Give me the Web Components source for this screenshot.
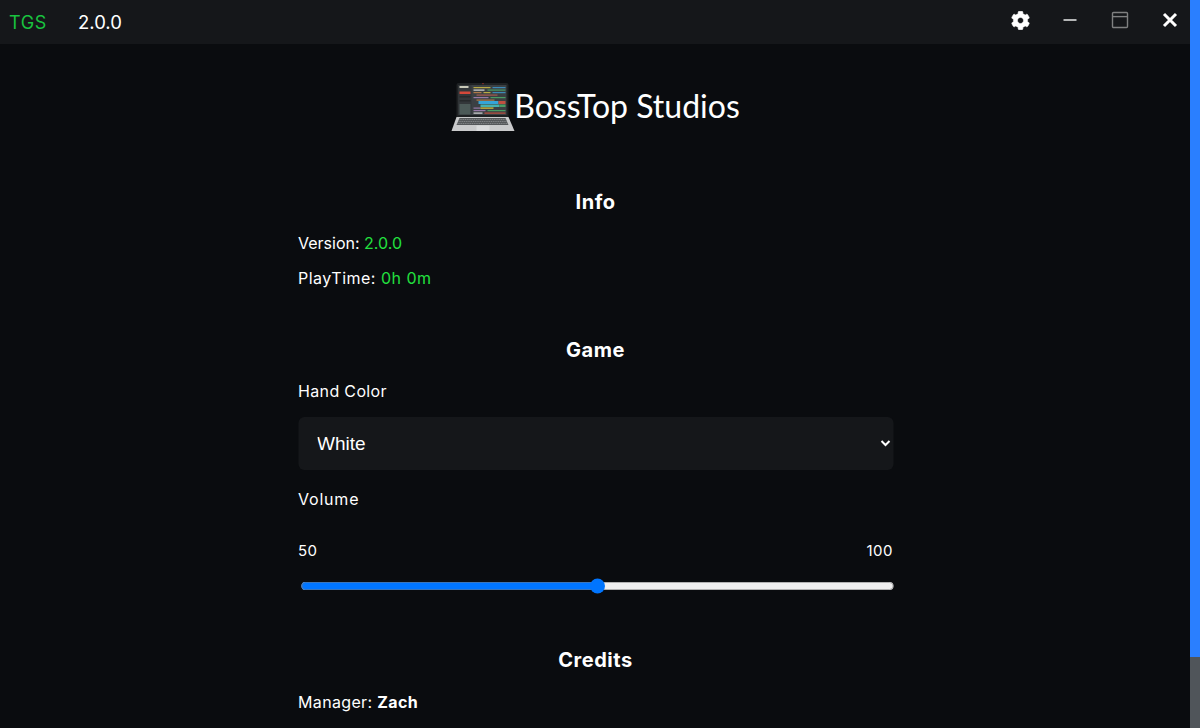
<!DOCTYPE html>
<html>
<head>
<meta charset="utf-8">
<title>TGS</title>
<style>
  html, body { margin: 0; height: 100%; overflow: hidden; background: #0a0c0f; }
  body { display: flex; font-family: Inter, "Liberation Sans", sans-serif; color: #fff; }
</style>
</head>
<body>
<app-window>
  <title-bar name="TGS" version="2.0.0"></title-bar>
  <studio-logo>BossTop Studios</studio-logo>
  <settings-section heading="Info">
    <info-row label="Version:" value="2.0.0" tone="green" style="letter-spacing:0"></info-row>
    <info-row label="PlayTime:" value="0h 0m" tone="green" style="letter-spacing:.5px"></info-row>
  </settings-section>
  <settings-section heading="Game">
    <color-select label="Hand Color" style="letter-spacing:.35px"></color-select>
    <volume-slider label="Volume" value="50" max="100" style="letter-spacing:.8px"></volume-slider>
  </settings-section>
  <settings-section heading="Credits">
    <info-row label="Manager:" value="Zach" tone="bold" style="letter-spacing:.35px;margin-top:18px"></info-row>
  </settings-section>
</app-window>
<fake-scrollbar></fake-scrollbar>

<script>
class AppWindow extends HTMLElement {
    constructor() {
        super();
        this.attachShadow({ mode: 'open' });
        this.shadowRoot.innerHTML = `
            <style>
                :host { display: block; flex: 1; min-width: 0; height: 728px; overflow: hidden; background: #0a0c0f; }
                .page { width: 595px; margin: 0 auto; transform: translateX(0.5px); }
            </style>
            <slot name="bar"></slot>
            <div class="page"><slot></slot></div>
        `;
    }
    connectedCallback() {
        const bar = this.querySelector('title-bar');
        if (bar) bar.slot = 'bar';
    }
}

class TitleBar extends HTMLElement {
    constructor() {
        super();
        this.attachShadow({ mode: 'open' });
        this.shadowRoot.innerHTML = `
            <style>
                :host { display: flex; align-items: center; height: 44px; background: #15171a; box-sizing: border-box; padding-left: 10px; gap: 10px; }
                .name { color: #19c23f; font-size: 18px; letter-spacing: .6px; width: 59px; margin-left: -1px; }
                .version { color: #fff; font-size: 18.5px; flex: 1; }
                .btn { display: flex; width: 40px; height: 40px; margin-bottom: 4px; align-items: center; justify-content: center; }
            </style>
            <span class="name"></span>
            <span class="version"></span>
            <div class="btn"><svg width="19" height="19" viewBox="0 0 512 512"><path fill="#fff" stroke="#fff" stroke-width="14" d="M487.4 315.7l-42.6-24.6c4.3-23.2 4.3-47 0-70.2l42.6-24.6c4.9-2.8 7.1-8.6 5.5-14-11.1-35.6-30-67.8-54.7-94.6-3.8-4.1-10-5.1-14.8-2.3L380.8 110c-17.9-15.4-38.5-27.3-60.8-35.1V25.8c0-5.6-3.9-10.5-9.4-11.7-36.7-8.2-74.3-7.8-109.2 0-5.5 1.2-9.4 6.1-9.4 11.7V75c-22.2 7.9-42.8 19.8-60.8 35.1L88.7 85.5c-4.9-2.8-11-1.9-14.8 2.3-24.7 26.7-43.6 58.9-54.7 94.6-1.7 5.4.6 11.2 5.5 14L67.3 221c-4.3 23.2-4.3 47 0 70.2l-42.6 24.6c-4.9 2.8-7.1 8.6-5.5 14 11.1 35.6 30 67.8 54.7 94.6 3.8 4.1 10 5.1 14.8 2.3l42.6-24.6c17.9 15.4 38.5 27.3 60.8 35.1v49.2c0 5.6 3.9 10.5 9.4 11.7 36.7 8.2 74.3 7.8 109.2 0 5.5-1.2 9.4-6.1 9.4-11.7v-49.2c22.2-7.9 42.8-19.8 60.8-35.1l42.6 24.6c4.9 2.8 11 1.9 14.8-2.3 24.7-26.7 43.6-58.9 54.7-94.6 1.5-5.5-.7-11.3-5.6-14.1zM256 336c-44.1 0-80-35.9-80-80s35.9-80 80-80 80 35.9 80 80-35.9 80-80 80z"/></svg></div>
            <div class="btn"><svg width="16" height="16" viewBox="0 0 16 16"><rect x="1.5" y="7" width="13" height="2" fill="#b4b5b6"/></svg></div>
            <div class="btn"><svg width="18" height="18" viewBox="0 0 18 18"><rect x="1.5" y="1.5" width="15" height="15" rx="1" fill="none" stroke="#7f8081" stroke-width="1.4"/><line x1="1.5" y1="5.6" x2="16.5" y2="5.6" stroke="#7f8081" stroke-width="1.4"/></svg></div>
            <div class="btn"><svg width="18" height="18" viewBox="0 0 18 18"><path d="M3 3 L15 15 M15 3 L3 15" stroke="#fff" stroke-width="3" fill="none"/></svg></div>
        `;
        this.shadowRoot.querySelector('.name').textContent = this.getAttribute('name');
        this.shadowRoot.querySelector('.version').textContent = this.getAttribute('version');
    }
}

class StudioLogo extends HTMLElement {
    constructor() {
        super();
        this.attachShadow({ mode: 'open' });
        this.shadowRoot.innerHTML = `
            <style>
                :host { display: flex; align-items: center; justify-content: center; height: 50px; margin-top: 38px; }
                .text { font-family: Lato, sans-serif; font-size: 32px; line-height: 40px; color: #fff; font-weight: 400; margin: -2px 0 0 -1px; }
                svg { display: block; margin-left: -2px; }
            </style>
            <svg width="66" height="50" viewBox="0 0 66 50">
                <path d="M7 3 Q7 1 9 1 L57 1 Q59 1 59 3 L59 35 L7 35 Z" fill="#1e2123"/>
                <rect x="33" y="1" width="1" height="1.2" fill="#c0392b"/>
                <rect x="9" y="3" width="48" height="30" fill="#3b4043"/>
                <rect x="9" y="3" width="13" height="30" fill="#33373a"/>
                <rect x="10" y="4" width="9" height="2" fill="#c8c8b8"/>
                <rect x="10" y="9.5" width="11" height="2.5" fill="#d4483a"/>
                <rect x="10" y="14" width="11" height="1.5" fill="#26292b"/>
                <rect x="10" y="18" width="11" height="1.5" fill="#26292b"/>
                <rect x="10" y="22" width="11" height="10.5" fill="#4c5a58"/>
                <rect x="24" y="5" width="17" height="1.2" fill="#b8a944"/><rect x="43" y="5" width="13" height="1.2" fill="#3c8ab8"/>
                <rect x="24" y="7.5" width="11" height="1.2" fill="#d8d8d8"/><rect x="38" y="7.5" width="18" height="1.2" fill="#4a9c64"/>
                <rect x="24" y="10" width="8" height="1.2" fill="#b07a48"/><rect x="34" y="10" width="7" height="1.2" fill="#b8a944"/><rect x="43" y="10" width="13" height="1.2" fill="#3c8ab8"/>
                <rect x="27" y="12.5" width="21" height="1.2" fill="#a85a50"/>
                <rect x="24" y="15" width="15" height="1.2" fill="#987aa8"/><rect x="41" y="15" width="15" height="1.2" fill="#4a9c64"/>
                <rect x="27" y="17.5" width="18" height="1.2" fill="#b07a48"/>
                <rect x="29" y="19" width="20" height="3" fill="#35a4d8"/><rect x="49" y="19" width="7" height="3" fill="#c05040"/>
                <rect x="31" y="22.5" width="19" height="2.5" fill="#45b0b0"/><rect x="50" y="22.5" width="6" height="2.5" fill="#4a9c64"/>
                <rect x="24" y="25.5" width="7" height="1.2" fill="#987aa8"/><rect x="31" y="25.5" width="13" height="1.2" fill="#e0c83c"/>
                <rect x="24" y="28" width="12" height="1.2" fill="#987aa8"/><rect x="38" y="28" width="18" height="1.2" fill="#4a9c64"/>
                <rect x="24" y="30.5" width="9" height="1.2" fill="#d8d8d8"/><rect x="35" y="30.5" width="21" height="1.2" fill="#c05040"/>
                <path d="M7 35 L59 35 L65 49 L2 49 Z" fill="#c9cacb"/>
                <path d="M10 36 L56 36 L59 43 L7 43 Z" fill="#55585a"/>
                <path d="M10 37.5 H56 M9 39.5 H57 M8 41.5 H58" stroke="#8b8e90" stroke-width="0.8" stroke-dasharray="1.2 .6"/>
                <rect x="27" y="43.5" width="13" height="5.5" fill="#dadbdc"/>
            </svg>
            <span class="text"><slot></slot></span>
        `;
    }
}

class SettingsSection extends HTMLElement {
    constructor() {
        super();
        this.attachShadow({ mode: 'open' });
        this.shadowRoot.innerHTML = `
            <style>
                :host { display: block; margin-top: 35px; }
                :host(:first-of-type) { margin-top: 57px; }
                h2 { margin: 0 0 17px; font-size: 20px; line-height: 26px; font-weight: 700; letter-spacing: .55px; text-align: center; color: #fff; }
            </style>
            <h2></h2>
            <div class="body"><slot></slot></div>
        `;
        this.shadowRoot.querySelector('h2').textContent = this.getAttribute('heading');
    }
}

class InfoRow extends HTMLElement {
    constructor() {
        super();
        this.attachShadow({ mode: 'open' });
        this.shadowRoot.innerHTML = `
            <style>
                :host { display: block; height: 35px; font-size: 16px; line-height: 22px; letter-spacing: .3px; color: #fff; }
                .green { color: #22e03f; }
                .bold { font-weight: 700; }
            </style>
            <span class="label"></span> <span class="val"></span>
        `;
        this.shadowRoot.querySelector('.label').textContent = this.getAttribute('label');
        const val = this.shadowRoot.querySelector('.val');
        val.textContent = this.getAttribute('value');
        val.className = 'val ' + (this.getAttribute('tone') || '');
    }
}

class ColorSelect extends HTMLElement {
    constructor() {
        super();
        this.attachShadow({ mode: 'open' });
        this.shadowRoot.innerHTML = `
            <style>
                :host { display: block; font-size: 16px; line-height: 22px; letter-spacing: .3px; color: #fff; }
                select {
                    display: block; width: 100%; height: 53px; margin-top: 15px; padding: 0 15px;
                    border: none; border-radius: 6px; outline: none;
                    background-color: #15171a; color: #fff; letter-spacing: 0;
                    font-family: "Liberation Sans", sans-serif; font-size: 19px;
                }
            </style>
            <div class="label"></div>
            <select><option>White</option><option>Black</option></select>
        `;
        this.shadowRoot.querySelector('.label').textContent = this.getAttribute('label');
    }
}

class VolumeSlider extends HTMLElement {
    constructor() {
        super();
        this.attachShadow({ mode: 'open' });
        this.shadowRoot.innerHTML = `
            <style>
                :host { display: block; font-size: 16px; line-height: 22px; letter-spacing: .3px; color: #fff; margin-top: 18px; }
                .ends { display: flex; justify-content: space-between; margin-top: 30px; font-size: 15px; letter-spacing: .5px; }
                input { display: block; width: 594px; margin: 16px 0 53px 2px; box-sizing: border-box; }
            </style>
            <div class="label"></div>
            <div class="ends"><span class="cur"></span><span class="max"></span></div>
            <input type="range" min="0">
        `;
        const root = this.shadowRoot;
        root.querySelector('.label').textContent = this.getAttribute('label');
        root.querySelector('.cur').textContent = this.getAttribute('value');
        root.querySelector('.max').textContent = this.getAttribute('max');
        const input = root.querySelector('input');
        input.max = this.getAttribute('max');
        input.value = this.getAttribute('value');
        input.addEventListener('input', () => {
            root.querySelector('.cur').textContent = input.value;
        });
    }
}

class FakeScrollbar extends HTMLElement {
    constructor() {
        super();
        this.attachShadow({ mode: 'open' });
        this.shadowRoot.innerHTML = `
            <style>
                :host { display: flex; flex-direction: column; width: 10px; flex: none; height: 728px; background: #50555a; }
                .thumb { height: 657px; background: #2a7fff; }
            </style>
            <div class="thumb"></div>
        `;
    }
}

customElements.define('app-window', AppWindow);
customElements.define('title-bar', TitleBar);
customElements.define('studio-logo', StudioLogo);
customElements.define('settings-section', SettingsSection);
customElements.define('info-row', InfoRow);
customElements.define('color-select', ColorSelect);
customElements.define('volume-slider', VolumeSlider);
customElements.define('fake-scrollbar', FakeScrollbar);
</script>
</body>
</html>
